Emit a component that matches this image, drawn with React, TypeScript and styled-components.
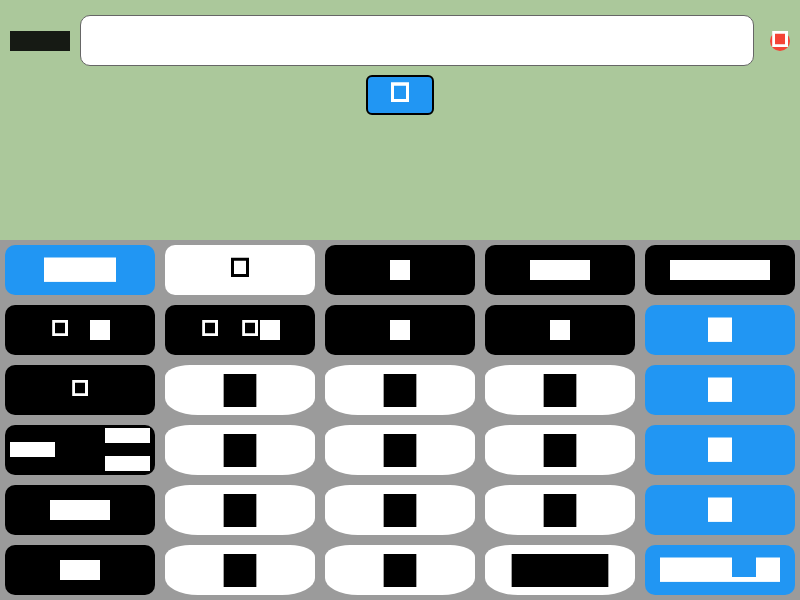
import React from "react";
import styled, { createGlobalStyle, css } from "styled-components";

const GlobalStyle = createGlobalStyle`
  * { box-sizing: border-box; }
  body { margin: 0; font-family: Roboto, sans-serif; overflow: hidden; }
`;

const Screen = styled.main`
  display: flex;
  flex-direction: column;
  width: 800px;
  height: 600px;
  background: #abc89b;
`;

const Display = styled.section`
  display: flex;
  flex-direction: column;
  align-items: center;
  height: 240px;
  padding-top: 15px;
`;

const Header = styled.div`
  display: flex;
  align-items: center;
  width: 100%;
  height: 51px;
  padding: 0 10px;
`;

const Label = styled.div`
  display: flex;
  width: 60px;
  margin-right: 10px;
  color: rgba(0, 0, 0, 0.87);
`;

const Field = styled.input`
  width: 674px;
  height: 51px;
  padding: 0 12px;
  border: 1px solid #666;
  border-radius: 10px;
  background: #fff;
  font-size: 20px;
  outline: none;
`;

const ClearButton = styled.button`
  display: flex;
  width: 20px;
  height: 20px;
  margin-left: 16px;
  padding: 0;
  border: 0;
  border-radius: 50%;
  background: #f44336;
  color: #fff;
`;

const SubmitButton = styled.button`
  display: flex;
  align-items: center;
  justify-content: center;
  width: 68px;
  height: 40px;
  margin-top: 9px;
  padding: 0;
  border: 2px solid #000;
  border-radius: 6px;
  background: #2196f3;
  color: #fff;
`;

const Keypad = styled.section`
  display: grid;
  grid-template-columns: repeat(5, 150px);
  grid-template-rows: repeat(6, 50px);
  gap: 10px;
  height: 360px;
  padding: 5px;
  background: #9b9b9b;
`;

type Tone = "blue" | "light" | "dark" | "digit";

const tones = {
  blue: css`background: #2196f3; color: #fff;`,
  light: css`background: #fff; color: #000;`,
  dark: css`background: #000; color: #fff;`,
  digit: css`
    background: #fff;
    color: #000;
    border-radius: 25px 25px 33px 33px / 12px 12px 17px 17px;
  `,
};

const Key = styled.button<{ $tone: Tone }>`
  display: flex;
  align-items: center;
  justify-content: center;
  padding: 0;
  border: 0;
  border-radius: 10px;
  ${(p) => tones[p.$tone]}
`;

const SplitKey = styled(Key)`
  justify-content: space-between;
  padding: 0 5px;
`;

const SplitLead = styled.span`
  display: flex;
  padding-bottom: 1px;
`;

const Stack = styled.span`
  display: flex;
  flex-direction: column;
  gap: 13px;
  padding-bottom: 1px;
`;

const GlyphSvg = styled.svg`
  display: block;
  flex: none;
  overflow: visible;
`;

interface GlyphsProps {
  run: string;
  size?: number;
  boxTop?: number;
}

const insets: Record<number, { x: number; top: number; bottom: number }> = {
  15: { x: 0, top: 0, bottom: 15 },
  20: { x: 0, top: 0, bottom: 20 },
  24: { x: 0, top: -0.5, bottom: 23.9 },
  32: { x: 0.35, top: 0, bottom: 33 },
};

/* "#" is a filled cell, "o" a hollow box, "_" a low bar and " " an empty cell. */
function Glyphs({ run, size = 20, boxTop = -0.2 }: GlyphsProps) {
  const { x: side, top, bottom } = insets[size];
  const groups = [...run.matchAll(/#+|o|_/g)];
  return (
    <GlyphSvg width={run.length * size} height={size} aria-hidden="true">
      {groups.map((group) => {
        const x = group.index! * size;
        if (group[0] === "o") {
          const d =
            size === 24
              ? `M${x + 3} ${boxTop}h18V19h-18zM${x + 6} 2.8V16h12V2.8z`
              : `M${x + 2.2} 0H${x + 18}V16H${x + 2.2}zM${x + 5} 2.7V13.3H${x + 15}V2.7z`;
          return <path key={x} d={d} fill="currentColor" fillRule="evenodd" />;
        }
        const y = group[0] === "_" ? 19 : top;
        return (
          <rect
            key={x}
            x={x - side}
            y={y}
            width={group[0].length * size + side * 2}
            height={bottom - y}
            fill="currentColor"
          />
        );
      })}
    </GlyphSvg>
  );
}

interface KeySpec {
  tone: Tone;
  run: string;
  split?: boolean;
}

const dark = (run: string): KeySpec => ({ tone: "dark", run });
const blue = (run: string): KeySpec => ({ tone: "blue", run });
const digit = (run = "#"): KeySpec => ({ tone: "digit", run });

const keys: KeySpec[] = [
  blue("###"), { tone: "light", run: "o" }, dark("#"), dark("###"), dark("#####"),
  dark("o #"), dark("o o#"), dark("#"), dark("#"), blue("#"),
  dark("o"), digit(), digit(), digit(), blue("#"),
  { tone: "dark", run: "###", split: true }, digit(), digit(), digit(), blue("#"),
  dark("###"), digit(), digit(), digit(), blue("#"),
  dark("##"), digit(), digit(), digit("###"), blue("###_#"),
];

const glyphSize: Record<Tone, number> = { blue: 24, light: 24, dark: 20, digit: 32 };

export default function App() {
  return (
    <Screen>
      <GlobalStyle />
      <Display>
        <Header>
          <Label><Glyphs run="###" /></Label>
          <Field aria-label="Expression" />
          <ClearButton aria-label="Clear"><Glyphs run="o" /></ClearButton>
        </Header>
        <SubmitButton aria-label="Submit">
          <Glyphs run="o" size={24} boxTop={-0.85} />
        </SubmitButton>
      </Display>
      <Keypad>
        {keys.map(({ tone, run, split }, i) =>
          split ? (
            <SplitKey key={i} $tone={tone}>
              <SplitLead><Glyphs run={run} size={15} /></SplitLead>
              <Stack>
                <Glyphs run={run} size={15} />
                <Glyphs run={run} size={15} />
              </Stack>
            </SplitKey>
          ) : (
            <Key key={i} $tone={tone}>
              <Glyphs run={run} size={glyphSize[tone]} />
            </Key>
          )
        )}
      </Keypad>
    </Screen>
  );
}
